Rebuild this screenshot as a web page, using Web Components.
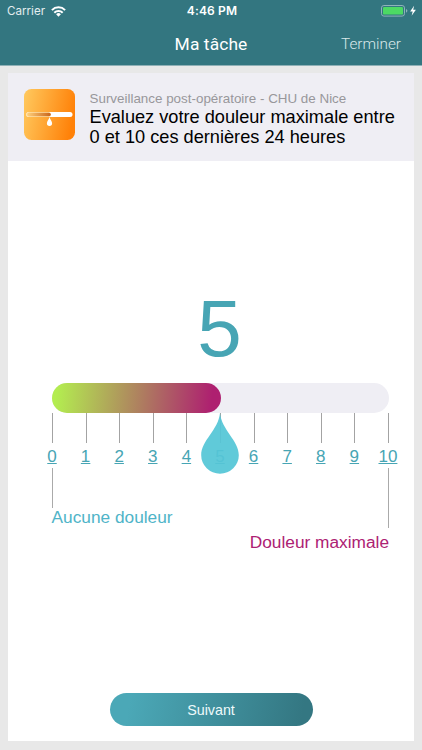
<!DOCTYPE html>
<html lang="fr">
<head>
<meta charset="utf-8">
<meta name="viewport" content="width=device-width, initial-scale=1">
<title>Ma tâche</title>
<style>
  html, body { height: 100%; }
  body {
    margin: 0;
    overflow: hidden;
    background: #e8e8e8;
    font-family: "Liberation Sans", Arial, sans-serif;
  }
</style>
</head>
<body>
<task-screen>
  <status-bar slot="top" carrier="Carrier" time="4:46 PM"></status-bar>
  <nav-bar slot="top">Ma tâche<span slot="action">Terminer</span></nav-bar>
  <task-header slot="header">
    <span slot="source">Surveillance post-opératoire - CHU de Nice</span>
    Evaluez votre douleur maximale entre 0 et 10 ces dernières 24 heures
  </task-header>
  <pain-scale value="5" max="10">
    <span slot="min">Aucune douleur</span>
    <span slot="max">Douleur maximale</span>
  </pain-scale>
  <pill-button slot="footer">Suivant</pill-button>
</task-screen>

<script>
  class TaskScreen extends HTMLElement {
    connectedCallback() {
      if (this.shadowRoot) return;
      this.attachShadow({ mode: 'open' }).innerHTML = `
        <style>
          :host { display: flex; flex-direction: column; height: 750px; }
          .top {
            flex: none;
            height: 65px;
            border-bottom: 1px solid #8fb0b6;
            background: #337680;
          }
          main {
            display: flex;
            flex-direction: column;
            flex: 1;
            margin: 7px 8px 9px;
            background: #fff;
          }
          .body { flex: 1; }
          footer { display: flex; justify-content: center; padding: 0 0 15px; }
        </style>
        <div class="top"><slot name="top"></slot></div>
        <main>
          <slot name="header"></slot>
          <div class="body"><slot></slot></div>
          <footer><slot name="footer"></slot></footer>
        </main>
      `;
    }
  }

  class StatusBar extends HTMLElement {
    connectedCallback() {
      if (this.shadowRoot) return;
      this.attachShadow({ mode: 'open' }).innerHTML = `
        <style>
          :host {
            display: grid;
            grid-template-columns: 1fr auto 1fr;
            align-items: center;
            height: 22px;
            padding: 0 5px 0 7px;
            color: #fff;
            font-family: Inter, "Liberation Sans", sans-serif;
            font-size: 12px;
            line-height: 22px;
          }
          .left, .right { display: flex; align-items: center; }
          .left { gap: 6px; color: #e3edef; font-size: 11.6px; }
          .right { justify-content: flex-end; }
          .time { font-weight: 600; font-size: 12px; letter-spacing: .15px; }
          svg { display: block; }
        </style>
        <div class="left">
          <span>${this.getAttribute('carrier')}</span>
          <svg width="15" height="11" viewBox="0 0 15 11" aria-hidden="true">
            <g fill="none" stroke="#fff" stroke-width="2">
              <path d="M.9 4.100a9.300 9.300 0 0 1 13.200 0"/>
              <path d="M3.300 6.700a5.900 5.900 0 0 1 8.400 0"/>
            </g>
            <path fill="#fff" d="M7.500 10.700 5.100 8.300a3.400 3.400 0 0 1 4.800 0z"/>
          </svg>
        </div>
        <span class="time">${this.getAttribute('time')}</span>
        <div class="right">
          <svg width="36" height="12" viewBox="0 0 36 12" aria-hidden="true">
            <rect x=".5" y=".5" width="23" height="10.6" rx="2.4" fill="none" stroke="#8fb3b9"/>
            <rect x="2" y="2" width="20" height="7.6" rx="1.2" fill="#4cd964"/>
            <path d="M25 4v3.7q1.4-.6 1.4-1.85T25 4z" fill="#8fb3b9"/>
            <path d="M33.1.8 29.1 6.6h2.6l-1.1 4.2 4.3-6h-2.7z" fill="#fff"/>
          </svg>
        </div>
      `;
    }
  }

  class NavBar extends HTMLElement {
    connectedCallback() {
      if (this.shadowRoot) return;
      this.attachShadow({ mode: 'open' }).innerHTML = `
        <style>
          :host {
            display: grid;
            grid-template-columns: 1fr auto 1fr;
            align-items: center;
            height: 43px;
            padding: 0 21px;
            color: #fff;
            font-family: Roboto, sans-serif;
          }
          .title { grid-column: 2; font-size: 17.4px; font-weight: 400; letter-spacing: .1px; }
          .action {
            justify-self: end;
            padding-top: 1px;
            color: #d9e8ea;
            font-size: 15.3px;
            font-weight: 300;
          }
        </style>
        <span class="title"><slot></slot></span>
        <span class="action"><slot name="action"></slot></span>
      `;
    }
  }

  class TaskHeader extends HTMLElement {
    connectedCallback() {
      if (this.shadowRoot) return;
      this.attachShadow({ mode: 'open' }).innerHTML = `
        <style>
          :host {
            display: flex;
            gap: 15px;
            box-sizing: border-box;
            height: 88px;
            padding: 16px 12px 0 15.5px;
            background: #efeef4;
          }
          svg { flex: none; width: 51px; height: 51px; }
          .text { padding-top: 2px; }
          .source { color: #98979b; font-size: 13.4px; line-height: 16px; white-space: nowrap; }
          .question { margin-top: 1px; color: #000; font-size: 18.2px; line-height: 19.5px; }
        </style>
        <svg viewBox="0 0 51 51" aria-hidden="true">
          <defs>
            <linearGradient id="tile" x1="0" y1=".2" x2="1" y2=".4">
              <stop offset="0" stop-color="#ffc75c"/>
              <stop offset="1" stop-color="#ff8108"/>
            </linearGradient>
            <linearGradient id="fill" x1="0" x2="1">
              <stop offset="0" stop-color="#ffcf7a"/>
              <stop offset="1" stop-color="#c8641b"/>
            </linearGradient>
          </defs>
          <rect width="51" height="51" rx="7.5" fill="url(#tile)"/>
          <rect x="2.3" y="23" width="46.2" height="5" rx="2.5" fill="#fff"/>
          <rect x="2.300" y="23" width="24.500" height="5" rx="2.500" fill="#ffe0a6"/>
          <rect x="3.2" y="23.8" width="23.6" height="3.4" rx="1.7" fill="url(#fill)"/>
          <path fill="#fff" d="M25.500 28c.5 2.600 2.600 4.200 2.600 6.300a2.600 2.600 0 0 1-5.200 0c0-2.100 2.100-3.700 2.600-6.300z"/>
        </svg>
        <div class="text">
          <div class="source"><slot name="source"></slot></div>
          <div class="question"><slot></slot></div>
        </div>
      `;
    }
  }

  class PainScale extends HTMLElement {
    connectedCallback() {
      if (this.shadowRoot) return;
      const value = Number(this.getAttribute('value'));
      const max = Number(this.getAttribute('max'));
      const steps = Array.from({ length: max + 1 }, (_, i) => `
        <div class="step">
          <i></i><a>${i}</a>
          ${i === value ? '<svg class="drop" viewBox="0 0 38 61" aria-hidden="true"><path d="M19 0c1.600 17 18.800 27.500 18.800 42.200a18.800 18.500 0 0 1-37.600 0C.2 27.500 17.400 17 19 0z"/></svg>' : ''}
        </div>
      `).join('');

      this.attachShadow({ mode: 'open' }).innerHTML = `
        <style>
          :host { display: block; width: 337px; margin-left: 44px; padding-top: 121px; }
          .value {
            height: 101px;
            color: #47a5b4;
            font-size: 80px;
            line-height: 93px;
            text-align: center;
            text-indent: -2px;
          }
          .track { height: 30px; border-radius: 15px; background: #efeef4; }
          .fill {
            width: ${(value / max) * 100}%;
            height: 100%;
            border-radius: 15px;
            background: linear-gradient(95deg, #b3ed50 3%, #ae7b60 54%, #ae2070 94%);
          }
          .steps { display: flex; justify-content: space-between; padding: 0 .5px; }
          .step {
            position: relative;
            display: flex;
            flex-direction: column;
            align-items: center;
            width: 0;
            height: 55px;
          }
          .step i { width: 1px; height: 30px; background: #a3a3a3; }
          .step a {
            margin-top: 4px;
            margin-left: -1px;
            color: #47a5b4;
            font-size: 17px;
            line-height: 20px;
            text-decoration: underline;
            text-decoration-thickness: 1px;
            text-underline-offset: 1px;
          }
          .drop {
            position: absolute;
            top: 0;
            left: -19px;
            width: 38px;
            height: 61px;
            fill: #55c6d7;
            opacity: .93;
          }
          .ends { display: flex; justify-content: space-between; white-space: nowrap; }
          .end { display: flex; flex-direction: column; font-size: 17.3px; line-height: 20px; }
          .end::before { content: ""; width: 1px; height: 40px; background: #aaa; }
          .min { color: #4fb4c8; }
          .max { align-items: flex-end; color: #ad2173; }
          .max::before { height: 60px; }
          .end span { margin-top: -1px; margin-left: -.5px; }
          .max span { margin-top: 4px; }
        </style>
        <div class="value">${value}</div>
        <div class="track"><div class="fill"></div></div>
        <div class="steps">${steps}</div>
        <div class="ends">
          <div class="end min"><span><slot name="min"></slot></span></div>
          <div class="end max"><span><slot name="max"></slot></span></div>
        </div>
      `;
    }
  }

  class PillButton extends HTMLElement {
    connectedCallback() {
      if (this.shadowRoot) return;
      this.attachShadow({ mode: 'open' }).innerHTML = `
        <style>
          :host { display: block; }
          button {
            display: block;
            width: 203px;
            height: 33px;
            border: 0;
            border-radius: 17px;
            padding: 0;
            color: #eefafb;
            background: linear-gradient(100deg, #4ba8b7 10%, #347782 94%);
            font: 14.3px "Liberation Sans", Arial, sans-serif;
          }
        </style>
        <button type="button"><slot></slot></button>
      `;
    }
  }

  customElements.define('task-screen', TaskScreen);
  customElements.define('status-bar', StatusBar);
  customElements.define('nav-bar', NavBar);
  customElements.define('task-header', TaskHeader);
  customElements.define('pain-scale', PainScale);
  customElements.define('pill-button', PillButton);
</script>
</body>
</html>
